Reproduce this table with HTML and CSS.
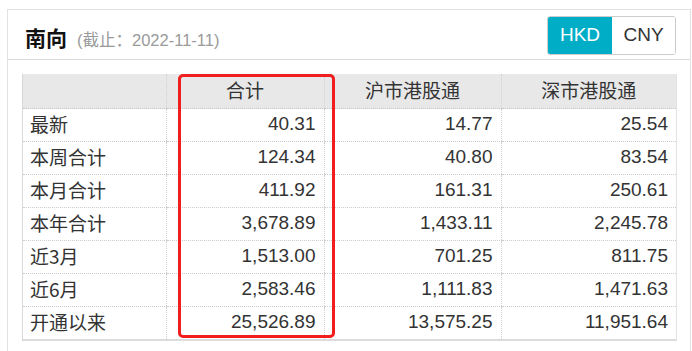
FILE: index.html
```html
<!DOCTYPE html>
<html lang="zh-CN">
<head>
<meta charset="utf-8">
<title>南向</title>
<link rel="stylesheet" href="styles.css">
</head>
<body>
<div class="card">
  <div class="card-head">
    <div class="title"><span class="name">南向</span><span class="date">(截止：2022-11-11)</span></div>
    <div class="seg">
      <span class="seg-item active">HKD</span>
      <span class="seg-item">CNY</span>
    </div>
  </div>
  <div class="card-body">
    <div class="table-wrap">
      <table class="data">
        <colgroup>
          <col class="c1"><col class="c2"><col class="c3"><col class="c4">
        </colgroup>
        <thead>
          <tr><th></th><th>合计</th><th>沪市港股通</th><th>深市港股通</th></tr>
        </thead>
        <tbody>
          <tr><td>最新</td><td>40.31</td><td>14.77</td><td>25.54</td></tr>
          <tr><td>本周合计</td><td>124.34</td><td>40.80</td><td>83.54</td></tr>
          <tr><td>本月合计</td><td>411.92</td><td>161.31</td><td>250.61</td></tr>
          <tr><td>本年合计</td><td>3,678.89</td><td>1,433.11</td><td>2,245.78</td></tr>
          <tr><td>近3月</td><td>1,513.00</td><td>701.25</td><td>811.75</td></tr>
          <tr><td>近6月</td><td>2,583.46</td><td>1,111.83</td><td>1,471.63</td></tr>
          <tr><td>开通以来</td><td>25,526.89</td><td>13,575.25</td><td>11,951.64</td></tr>
        </tbody>
      </table>
      <div class="highlight"></div>
    </div>
  </div>
</div>
</body>
</html>
```
FILE: styles.css
```css
html, body {
  margin: 0;
  padding: 0;
  background: #ffffff;
}
body {
  padding: 9px 2px 0 7px;
  font-family: "Liberation Sans", Arial, "Noto Sans CJK SC", sans-serif;
  color: #333333;
}
.card {
  border: 1px solid #e2e2e2;
  width: 682px;
  padding-bottom: 30px;
}
.card-head {
  height: 49px;
  border-bottom: 1px solid #d9d9d9;
  display: flex;
  align-items: center;
  justify-content: space-between;
  padding: 0 14px 0 17px;
}
.title {
  display: flex;
  align-items: baseline;
  gap: 10px;
  margin-top: 4px;
}
.name {
  font-size: 21px;
  font-weight: bold;
  color: #111111;
  font-family: "Noto Sans CJK SC", sans-serif;
}
.date {
  font-size: 16.5px;
  color: #9a9a9a;
}
.seg {
  display: flex;
  height: 39px;
  margin-top: 1px;
  border-radius: 3px;
  overflow: hidden;
  border: 1px solid #cccccc;
  box-sizing: border-box;
}
.seg-item {
  display: flex;
  align-items: center;
  justify-content: center;
  font-size: 19px;
  color: #333333;
  background: #ffffff;
  width: 63px;
}
.seg-item.active {
  background: #00adc7;
  color: #ffffff;
  width: 64px;
}
.card-body {
  padding: 14px 12px 0 14px;
}
.table-wrap {
  position: relative;
  width: 655px;
  border-left: 1px solid #d8d8d8;
  border-bottom: 2px solid #dcdcdc;
  border-right: 1px solid #e4e4e4;
  box-sizing: border-box;
}
.data {
  width: 100%;
  border-collapse: collapse;
  table-layout: fixed;
  font-size: 19px;
}
.c1 { width: 143px; }
.c2 { width: 158px; }
.c3 { width: 177px; }
.c4 { width: 175px; }
.data th {
  background: #e8e8e8;
  font-weight: normal;
  height: 30px;
  padding: 0 0 4px;
  text-align: center;
  border-left: 1px dotted #d0d0d0;
  border-bottom: 1px dotted #c8c8c8;
  color: #333333;
  font-family: "Noto Sans CJK SC", sans-serif;
  line-height: 1;
}
.data td {
  height: 28px;
  padding: 0 8px 4px 7px;
  text-align: right;
  border-left: 1px dotted #d0d0d0;
  border-bottom: 1px dotted #cccccc;
  line-height: 1;
}
.data tr:last-child td {
  border-bottom: none;
}
.data th:first-child, .data td:first-child {
  border-left: none;
}
.data td:first-child {
  text-align: left;
  font-family: "Noto Sans CJK SC", sans-serif;
}
.highlight {
  position: absolute;
  left: 155px;
  top: 0;
  width: 157px;
  height: 264px;
  border: 3px solid #f21d1d;
  border-radius: 5px;
  box-sizing: border-box;
  pointer-events: none;
}
```
